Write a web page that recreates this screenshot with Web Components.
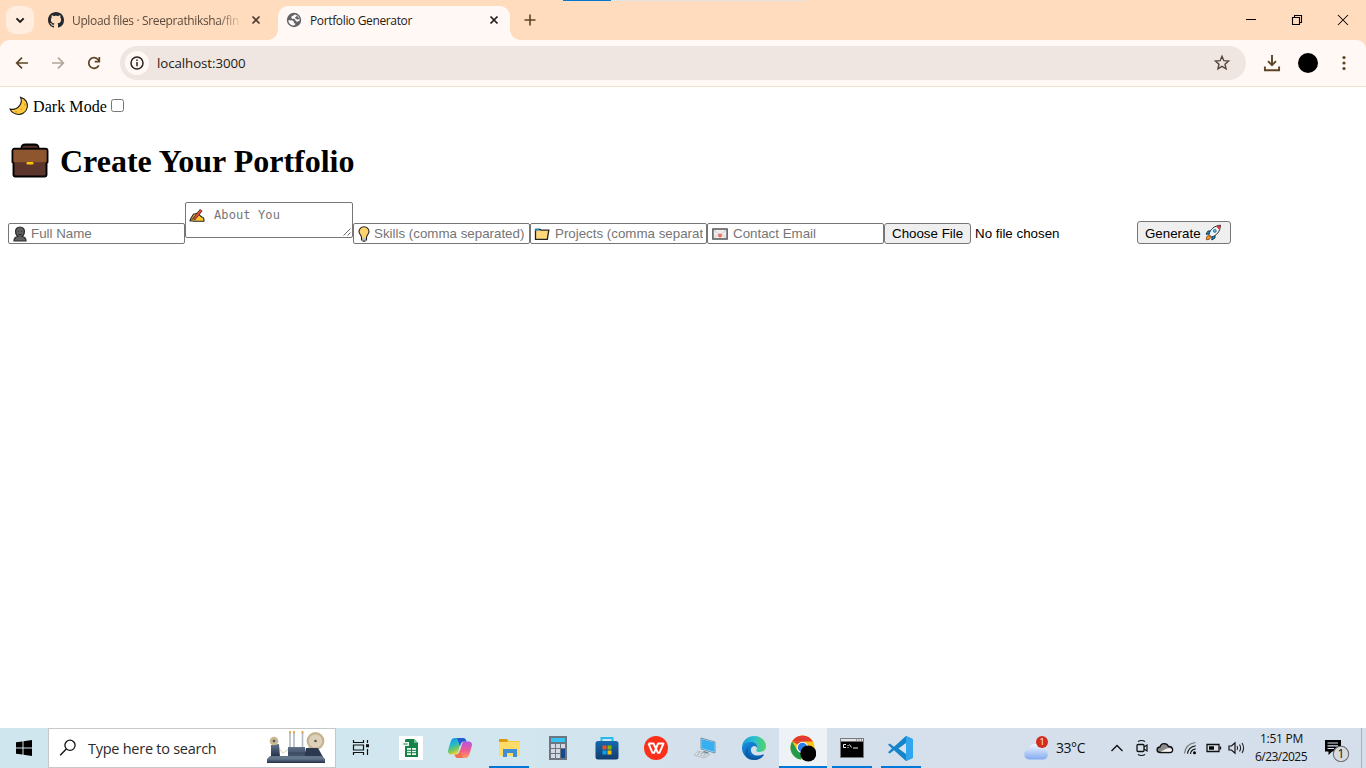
<!DOCTYPE html>
<html lang="en">
<head>
<meta charset="utf-8">
<title>Portfolio Generator</title>
<style>
html,body{margin:0;width:1366px;height:768px;overflow:hidden;background:#fff}
</style>
</head>
<body>
<desktop-screen></desktop-screen>
<script>
const ICONS = {
  chevron: [28,28,'<path d="M10.5 12.3l3.6 3.6 3.6-3.6" fill="none" stroke="#201a16" stroke-width="1.9"/>'],
  github: [16,16,'<path fill="#24292f" d="M8 0C3.58 0 0 3.58 0 8c0 3.54 2.29 6.53 5.47 7.59.4.07.55-.17.55-.38 0-.19-.01-.82-.01-1.49-2.01.37-2.53-.49-2.69-.94-.09-.23-.48-.94-.82-1.13-.28-.15-.68-.52-.01-.53.63-.01 1.08.58 1.23.82.72 1.21 1.87.87 2.33.66.07-.52.28-.87.51-1.07-1.78-.2-3.64-.89-3.64-3.95 0-.87.31-1.59.82-2.15-.08-.2-.36-1.02.08-2.12 0 0 .67-.21 2.2.82.64-.18 1.32-.27 2-.27s1.36.09 2 .27c1.53-1.04 2.2-.82 2.2-.82.44 1.1.16 1.92.08 2.12.51.56.82 1.27.82 2.15 0 3.07-1.87 3.75-3.65 3.95.29.25.54.73.54 1.48 0 1.07-.01 1.93-.01 2.2 0 .21.15.46.55.38A8.01 8.01 0 0 0 16 8c0-4.42-3.58-8-8-8z"/>'],
  close: [10,10,'<path d="M1.5 1.5l7 7M8.5 1.5l-7 7" stroke="currentColor" stroke-width="1.7"/>'],
  globe: [16,16,'<circle cx="8" cy="8" r="7.2" fill="#5f6368"/><path d="M2.300 8.300h3.200c1.300 0 2.400.8 2.400 2v.9h1.300v1.900c-.4.300-1.200.5-1.700.5C4.700 13.400 2.400 11.200 2.300 8.300z" fill="#fff8f5"/><path d="M8.600 2.500c-.3.900-1.800 1-2.600 1.600-.9.700-.9 2.300.1 2.700.8.300 2.200 0 2.900.6.700.6.500 1.700 1.400 2.100.9.400 2-.1 3-.4.900-2.800-1-6.300-4.800-6.600z" fill="#fff8f5"/><path d="M10.700 3.200c-.2 1.100-.5 1.900-1.800 2.100l.4 1c1.200.2 1.300 1.300 2.200 1.300.7 0 1.200-.5 2.100-.5" fill="#5f6368"/>'],
  plus: [14,14,'<path d="M7 1.5v11M1.5 7h11" stroke="#5c4526" stroke-width="1.6"/>'],
  min: [12,12,'<path d="M1 5.5h10" stroke="#000"/>'],
  restore: [12,12,'<path d="M1.5 3.5h7v7h-7zM3.5 3.500V1.500h7v7h-2" fill="none" stroke="#000" stroke-width="1.1"/>'],
  winclose: [12,12,'<path d="M1 1l10 10M11 1L1 11" stroke="#000" stroke-width="1.05"/>'],
  back: [16,16,'<path d="M14 8H3M8 2.700L2.700 8 8 13.300" fill="none" stroke="#5c4526" stroke-width="1.7"/>'],
  fwd: [16,16,'<path d="M2 8h11M8 2.700L13.300 8 8 13.300" fill="none" stroke="#b1a59c" stroke-width="1.7"/>'],
  reload: [16,16,'<path d="M12.800 10.400A5.300 5.300 0 1 1 12.200 4.700L13.400 6" fill="none" stroke="#5c4526" stroke-width="1.7"/><path d="M13.300 2v4.700H8.700" fill="none" stroke="#5c4526" stroke-width="1.7"/>'],
  info: [24,24,'<circle cx="12" cy="12" r="12" fill="#fff8f5"/><circle cx="12" cy="12" r="6" fill="none" stroke="#2b221c" stroke-width="1.5"/><path d="M12 11v4.200M12 8.400v1.600" stroke="#2b221c" stroke-width="1.500"/>'],
  star: [18,18,'<path d="M9 2.300l1.850 4.350 4.700.4-3.550 3.100 1.050 4.600L9 12.300l-4.050 2.450L6 10.150l-3.550-3.100 4.700-.4z" fill="none" stroke="#55463f" stroke-width="1.400"/>'],
  download: [18,18,'<path d="M9 1v10M5 7.200l4 4 4-4M1.900 12.500v3.700h14.200v-3.700" fill="none" stroke="#5c4526" stroke-width="1.900"/>'],
  avatar: [20,20,'<circle cx="10" cy="10" r="10" fill="#000"/>'],
  dots: [4,16,'<g fill="#5c4526"><circle cx="2" cy="2.500" r="1.600"/><circle cx="2" cy="8" r="1.600"/><circle cx="2" cy="13.500" r="1.600"/></g>'],
  moon: [20,20,'<path d="M11.500 1.200C16.500 2.500 19.300 7 18.300 11.500c-1.200 5.200-6.300 8-11.300 6.500-3-.9-5-2.600-5.900-4.900 3.500.7 7.300-.6 9.500-3.500 2-2.700 2.100-5.700.9-8.400z" fill="#ffc83d" stroke="#1b1b1b" stroke-width="1.100"/><path d="M15.400 7.500l.8 2M13 12.500l-1.500 1.400M8.200 15.900l-2-.3" stroke="#e39a1f" stroke-width="1.200"/>'],
  briefcase: [40,38,'<path d="M13 8V6.500q0-2.500 2.500-2.500h9Q27 4 27 6.500V8" fill="none" stroke="#000" stroke-width="5"/><path d="M13 8V7q0-2 2-2h10q2 0 2 2v1" fill="none" stroke="#5b352c" stroke-width="2.500"/><path d="M4.500 6.800h31a2 2 0 0 1 2 2V20l-1 1v12a1.500 1.500 0 0 1-1.500 1.500H5A1.500 1.500 0 0 1 3.500 33V21l-1-1V8.800a2 2 0 0 1 2-2z" fill="#5c352d" stroke="#000" stroke-width="1.900"/><path d="M3.500 7.700h33v12.600h-33z" fill="#8e562e"/><rect x="16.500" y="20" width="7" height="2.500" rx="1" fill="#ffc400"/>'],
  person: [14,16,'<path d="M7 1C3.900 1 2.500 3 2.600 5.500c0 2.600 1.200 4.300 2.400 5-2.600.4-4 1.600-4 4.500h12c0-2.900-1.400-4.100-4-4.500 1.200-.7 2.400-2.400 2.400-5C11.500 3 10 1 7 1z" fill="#616161" stroke="#2a2a2a" stroke-width="1.200"/><path d="M4.800 5.200h1M8.200 5.200h1M5.400 8.300q1.600.8 3.200 0" stroke="#222" fill="none"/>'],
  writing: [16,16,'<path d="M4.500 6.200L8.800 5l2.700 3 1.300 1c2 .3 2.400 2.300 2.100 4.300H5.500L1 12.700l.7-2z" fill="#ffc52f" stroke="#242424" stroke-width="1.100"/><path d="M12.300 2L4.500 11.500" stroke="#333" stroke-width="3.300"/><path d="M12 2.400l-7.200 8.700" stroke="#ea4933" stroke-width="2"/><path d="M2 12.300l3.700-3" stroke="#444"/>'],
  bulb: [12,16,'<path d="M6 .8C2.800.8 1 3.100 1 5.600c0 2.600 2.500 3.300 2.500 6V14h5v-2.400c0-2.700 2.500-3.400 2.500-6C11 3.100 9.200.8 6 .8z" fill="#ffd36b" stroke="#222" stroke-width="1.100"/><path d="M4.300 12h3.400v2.400H4.300z" fill="#b6bec5"/><path d="M4.500 15.200h3" stroke="#222"/>'],
  folder: [16,14,'<path d="M1.500 12.300V2.500h4.700l.8.700h7.800l-1.500 9.100z" fill="#ffd77a" stroke="#222" stroke-width="1.300"/><path d="M2 2.500h3M1.800 2v2" stroke="#168bd0" stroke-width="1.300"/>'],
  mail: [16,12,'<rect x=".9" y="1" width="14.200" height="10" fill="#eee" stroke="#555" stroke-width="1.500"/><path d="M1.700 10l5-4M14.300 10l-5-4M1.700 2L8 7l6.300-5" fill="none" stroke="#c9c9c9" stroke-width=".8"/><circle cx="8" cy="7.500" r="2" fill="#f2705c"/>'],
  rocket: [17,17,'<path d="M1.300 15.700c0-2.300.5-3.900 2.300-4.400l2.100 2.100c-.5 1.700-2 2.300-4.400 2.300z" fill="#f7931e" stroke="#8a3a15" stroke-width=".8"/><path d="M5.500 7H3L1 10.200l3.500-.3M10 11.500V14l-3.200 2 .3-3.500" fill="#1690d0" stroke="#17384b"/><path d="M4 10.500c1-4.900 5-8.700 11.500-9.300C15.200 7.500 11.400 11.800 6.500 13z" fill="#eef7fb" stroke="#202b32"/><path d="M11 2.500l4.500-1.300-1 4.800z" fill="#e73732"/><circle cx="9.800" cy="6.900" r="1.500" fill="#49b8e8" stroke="#2b5368" stroke-width=".7"/>'],
  windows: [16,16,'<path d="M0 2.300l6.500-.9v6.100H0zM7.500 1.200L16 0v7.500H7.500zM0 8.500h6.500v6.100L0 13.700zM7.500 8.500H16V16l-8.500-1.200z" fill="#000"/>'],
  search: [18,18,'<circle cx="11" cy="6.300" r="5.100" fill="none" stroke="#111" stroke-width="1.300"/><path d="M7.300 10L1.200 16.200" stroke="#111" stroke-width="1.400"/>'],
  machine: [60,34,'<defs><linearGradient id="g" x2="0" y2="1"><stop stop-color="#61748b"/><stop offset="1" stop-color="#202e44"/></linearGradient></defs><path d="M9 13L17 22 24 17M40 19l8-8" fill="none" stroke="#d9cfb0"/><path d="M5 14l8-1 1 13H5z" fill="url(#g)"/><circle cx="8" cy="10" r="4.300" fill="#c9b68e"/><circle cx="8" cy="10" r="1.300" fill="#445269"/><circle cx="49.500" cy="10" r="8.900" fill="#c4b590"/><circle cx="49.500" cy="10" r="6.600" fill="#ddd2b9"/><circle cx="49.500" cy="10" r="1.300" fill="#5a5854"/><path d="M24 1v16M28 1v16M36.500 1v16" stroke="#b4bdc6" stroke-width="1.700"/><path d="M24 0v2.500M28 0v2.500M36.500 0v2.500" stroke="#dfa445" stroke-width="1.700"/><path d="M22 16h17v11H22z" fill="url(#g)"/><path d="M40 17h12l5 9H38z" fill="#2a394f"/><path d="M4 25h52l3 3H1z" fill="#61758b"/><path d="M1 28h58v4H1z" fill="url(#g)"/><path d="M22 20h17M22 24h17" stroke="#53667c"/>'],
  taskview: [18,18,'<path d="M1.500 1v2.500h10V1M1.500 16v-2.500h10V16M1.500 6h10v5h-10zM15.500 1v3M15.500 10v6" fill="none" stroke="#111" stroke-width="1.200"/><path d="M14 5.200h3v3h-3z" fill="#111"/>'],
  sheet: [24,24,'<path fill="#fff" d="M0 0h24v24H0z"/><path d="M7 3h8l4 4v14H6V4z" fill="#138348"/><path d="M15 3v4h4" fill="#69be8c"/><path d="M8 12h9v7H8zM3 6h7v4H3z" fill="#eaf7ef"/><path d="M8 14.300h9M8 16.700h9M12.500 12v7M4.500 8h4" stroke="#138348"/>'],
  copilot: [26,24,'<defs><linearGradient id="a" x2=".4" y2="1"><stop stop-color="#168be9"/><stop offset=".45" stop-color="#25b9cb"/><stop offset=".75" stop-color="#7cc85a"/><stop offset="1" stop-color="#f2d43d"/></linearGradient><linearGradient id="b" y1="0" x2="0" y2="1"><stop stop-color="#b455df"/><stop offset=".55" stop-color="#ef5d92"/><stop offset="1" stop-color="#ff9c54"/></linearGradient></defs><path d="M8 2h9l-3 4-3 10c-.7 2-1.500 2.500-3 2.500H4.500C1.500 18.500.5 16 1.300 13.500l2.400-8C4.500 3 6 2 8 2z" fill="url(#a)"/><path d="M18 22H9l3-4 3-10c.7-2 1.500-2.500 3-2.500h3.500c3 0 4 2.500 3.200 5l-2.400 8C21.500 21 20 22 18 22z" fill="url(#b)"/><path d="M10 2h6c2 0 2.700 1 3.200 2.500l.5 1H17c-2 0-2.600 1-3.200 2.500L13 10z" fill="#2459d0"/><path d="M16 22h-5c-2 0-2.700-1-3.200-2.500l-.3-1H9c2 0 2.600-1 3.200-2.500L13 14z" fill="#f4704d"/>'],
  explorer: [24,22,'<path d="M2 2h8l2 2h11v15H2z" fill="#f8c940"/><path d="M2 2h8l1 2-1 1H2z" fill="#d99b14"/><path d="M2 5h21v14H2z" fill="#ffdb68"/><path d="M6 20v-8h14v8h-4v-4h-6v4z" fill="#3b8fd2"/>'],
  calc: [18,24,'<path d="M0 0h18v24H0z" fill="#6c7682"/><path d="M2 2h14v4H2z" fill="#36c2f2"/><path d="M2 8h4v4H2zM7 8h4v4H7zM12 8h4v4h-4zM2 13h4v4H2zM7 13h4v4H7zM2 18h4v4H2zM7 18h4v4H7z" fill="#d3d8e2"/><path d="M12 13h4v9h-4z" fill="#12498f"/>'],
  store: [24,24,'<defs><linearGradient id="s" x2="0" y2="1"><stop stop-color="#1669ae"/><stop offset="1" stop-color="#123d70"/></linearGradient></defs><path d="M6.500 7V2h11v5" fill="none" stroke="#25b9ed" stroke-width="1.900"/><rect x=".5" y="5" width="23" height="18.500" rx="2.500" fill="url(#s)"/><path d="M7.500 9.500h4v4h-4z" fill="#f25022"/><path d="M12.500 9.500h4v4h-4z" fill="#7fba00"/><path d="M7.500 14.500h4v4h-4z" fill="#00a4ef"/><path d="M12.500 14.500h4v4h-4z" fill="#ffb900"/>'],
  wps: [24,24,'<circle cx="12" cy="12" r="12" fill="#fb301b"/><path d="M4.500 7.500h5l3.300 7M4.500 7.500l4 9.300h1.600l4-9.300h1.500M11.700 12l2.200 4.800h1.500L19.500 7.500h-4" fill="none" stroke="#fff" stroke-width="1.900" stroke-linejoin="round"/>'],
  pc: [25,24,'<path d="M9 2l14 4v11L9 13z" fill="#d8f1fc" stroke="#577d96" stroke-width=".8"/><path d="M9.500 3l13 3.500v9.500L9.500 12.300z" fill="#38aff0"/><path d="M12 15l5 1.500-2 1.500-5-1.500z" fill="#718593"/><path d="M6 15l12 3.500-6 3.500-10-3z" fill="#dbe3e8" stroke="#9ca6af" stroke-width=".6"/><path d="M6 16.500l9 2.500M5 18l9 2.500" stroke="#a6b1ba" stroke-dasharray="2 1"/>'],
  edge: [24,24,'<defs><linearGradient id="e1" x2="1"><stop stop-color="#1599da"/><stop offset=".5" stop-color="#2bbfd0"/><stop offset="1" stop-color="#54d55f"/></linearGradient><linearGradient id="e2" x2="1" y2="1"><stop stop-color="#178ee0"/><stop offset="1" stop-color="#0754a5"/></linearGradient></defs><path d="M0 11C.6 4 6 0 12 0c7 0 12 5 12 10 0 4-3 6-6.200 6-2.400 0-4.300-1-3.200-2.400C16 11.800 14.500 8 9 8c-4 0-7.500 1-9 3z" fill="url(#e1)"/><path d="M0 11c1.500-3 5-5 9-5 4 0 6.500 3 6 6-.3-1-1.500-2.200-3-2-2 .2-3.600 2.500-3 5 .8 4 6 6 12 3.500.7-.2 1.200.2.800.800C19.500 22.300 16 24 12 24 5.500 24-.5 18.500 0 11z" fill="url(#e2)"/><path d="M8 10.300c-3 2-2.800 7 .5 9.700 3 2.400 7 2.300 12 .8C16 25.200 9 25 4.600 21.400 1.700 18 3 12.500 8 10.300z" fill="#0b4b91" opacity=".55"/>'],
  chrome: [27,27,'<circle cx="13.500" cy="12.500" r="12" fill="#fbc31c"/><path d="M3.100 6.500A12 12 0 0 1 23.900 6.500H13.500z" fill="#e33b2e"/><path d="M3.100 6.500L8.300 15.500 13.500 18.500l-1.500 6A12 12 0 0 1 3.100 6.500z" fill="#229b4c"/><path d="M3.100 6.500h12v6z" fill="#e33b2e"/><circle cx="13.500" cy="12.500" r="5.800" fill="#fff"/><circle cx="13.500" cy="12.500" r="4.700" fill="#2b7de9"/><circle cx="19.300" cy="18.500" r="8" fill="#000"/>'],
  cmd: [24,20,'<path d="M.5.5h23v19H.5z" fill="#000" stroke="#777"/><path d="M1 1h22v2.500H1z" fill="#e0e3e5"/><path d="M16 2h1M18.500 2h1M21 2h1" stroke="#555"/><path d="M6 6.500H3.500v3H6M8 7v1M8 9v1M9.500 6.500l2 3M13 10h5" fill="none" stroke="#eee" stroke-width="1"/>'],
  vscode: [25,25,'<path d="M18 0l7 3.300v18.400L18 25 6 14.200l-4.300 3.300L0 16.300 4 12.500 0 8.700l1.700-1.200L6 10.800z" fill="#1684ca"/><path d="M18 7v11l-7.500-5.500z" fill="#d7e2ec"/><path d="M18 0l7 3.300v18.400L18 25z" fill="#31a5ed"/>'],
  weather: [26,26,'<defs><linearGradient id="w" x2="0" y2="1"><stop stop-color="#f3f7ff"/><stop offset="1" stop-color="#83aaf0"/></linearGradient></defs><path d="M6 24.500a5.200 5.200 0 0 1-.5-10.300C6.500 10.500 9.300 9 12 9c3.500 0 6 2.200 6.800 5.200 3.400 0 6 2 6 5.200s-2.300 5.100-5 5.100z" fill="url(#w)"/><circle cx="19" cy="7" r="6" fill="#d52b1e"/>'],
  up: [14,10,'<path d="M1.500 8L7 2.500 12.500 8" fill="none" stroke="#111" stroke-width="1.400"/>'],
  cam: [14,18,'<rect x="2" y="5.500" width="7" height="7" rx="1" fill="none" stroke="#111" stroke-width="1.300"/><path d="M9 8l3-2v6L9 10M3 2.500q3.500-2 7 0M3 15.500q3.500 2 7 0" fill="none" stroke="#111" stroke-width="1.200"/>'],
  cloud: [18,14,'<path d="M4.500 11.500C0 11.500 0 6.300 4 6 5 1.500 11 1.500 12.500 5.500c5-.2 5.500 6 1.500 6z" fill="#8b8b8b" stroke="#111" stroke-width="1.300"/><path d="M4.500 10.800L11 7.500q3-1.600 5 1-.3 2.300-2 2.300z" fill="#f4f4f4"/>'],
  wifi: [14,14,'<g fill="none" stroke="#111" stroke-width="1.100"><path d="M1.500 12.500C2 6.500 6 2.500 12.500 1.500" stroke="#777"/><path d="M4.500 12.800C5 8.500 8 5.700 12.700 4.800M7.500 13c.3-2.700 2-4.600 5.200-5.100"/></g><circle cx="11.500" cy="11.800" r="1.500"/>'],
  battery: [16,10,'<path d="M1 1.500h12v7H1zM14.500 3.500v3" fill="none" stroke="#111" stroke-width="1.300"/><path d="M3 3.300h5v3.400H3z"/>'],
  sound: [18,14,'<path d="M1 5h2.500L7 1.800v10.400L3.500 9H1z" fill="none" stroke="#111" stroke-width="1.200"/><path d="M9 5q1.300 2 0 4M11.500 3.500q2.200 3.500 0 7M14 2q3.200 5 0 10" fill="none" stroke="#222" stroke-width="1.100"/>'],
  notice: [26,28,'<path d="M1 6h16v11.500H8L4.500 21v-3.500H1z"/><path d="M3.500 9H14M3.500 11.800H14M3.500 14.500H10" stroke="#dce2ea" stroke-width="1.200"/><circle cx="17" cy="20" r="7.700" fill="#d7dade" stroke="#6d6d6d" stroke-width="1.100"/>']
};

class UiIcon extends HTMLElement {
  connectedCallback() {
    const [w, h, body] = ICONS[this.getAttribute('name')];
    this.attachShadow({mode: 'open'}).innerHTML =
      `<style>:host{display:block;flex:none;width:${w}px;height:${h}px}svg{display:block}</style>
       <svg width="${w}" height="${h}" viewBox="0 0 ${w} ${h}" aria-hidden="true">${body}</svg>`;
  }
}
customElements.define('ui-icon', UiIcon);

/* A one-line label whose tracking is adjusted to the width it is given. */
class UiLabel extends HTMLElement {
  connectedCallback() {
    const w = Number(this.getAttribute('width'));
    this.attachShadow({mode: 'open'}).innerHTML =
      `<style>:host{display:block;flex:none;width:${w}px;white-space:nowrap}span{display:inline-block}</style><span><slot></slot></span>`;
    const s = this.shadowRoot.querySelector('span');
    const n = this.textContent.length;
    const natural = s.getBoundingClientRect().width;
    if (natural) s.style.letterSpacing = ((w - natural) / n).toFixed(3) + 'px';
  }
}
customElements.define('ui-label', UiLabel);

function define(name, css, html) {
  const t = document.createElement('template');
  t.innerHTML = `<style>*{box-sizing:border-box}${css}</style>${html}`;
  customElements.define(name, class extends HTMLElement {
    constructor() {
      super();
      this.attachShadow({mode: 'open'}).append(t.content.cloneNode(true));
    }
  });
}

define('browser-tab', `
  :host{display:flex;align-items:center;height:28px;font:12px/28px "Open Sans",sans-serif;color:#5c4a3d}
  .title{margin-left:8px;width:168px;overflow:hidden;padding-top:1px}
  :host(:not([active])) .title{-webkit-mask:linear-gradient(90deg,#000 146px,transparent 170px)}
  .x{margin-left:11px;color:#4b3c30}
  :host([active]){position:relative;width:232px;height:34px;padding:0 0 6px 8px;background:#fff8f5;border-radius:10px 10px 0 0;color:#241a15}
  :host([active]) .title{width:171px}
  :host([active]) .x{margin-left:8px;color:#211a16}
  :host([active])::before,:host([active])::after{content:"";position:absolute;bottom:0;width:10px;height:10px}
  :host([active])::before{left:-10px;background:radial-gradient(circle at 0 0,transparent 9.500px,#fff8f5 10px)}
  :host([active])::after{right:-10px;background:radial-gradient(circle at 100% 0,transparent 9.500px,#fff8f5 10px)}
`, `<slot name="icon"></slot><div class="title"><slot></slot></div><ui-icon class="x" name="close"></ui-icon>`);

define('tab-strip', `
  :host{display:flex;height:40px;padding:6px 0 0 6px;background:#ffdcbd;position:relative}
  .drop{width:28px;height:28px;border-radius:9px;background:#ffede0}
  .first{margin-left:14px;width:230px}
  .plus{margin:7px 0 0 13px}
  .controls{display:flex;margin:8px 0 0 auto;gap:34px;padding-right:17px}
  .load{position:absolute;left:563px;top:0;width:242px;height:1px;background:linear-gradient(90deg,#0078d4 48px,#e5e5e5 48px)}
`, `<div class="drop"><ui-icon name="chevron"></ui-icon></div>
  <browser-tab class="first"><ui-icon slot="icon" name="github"></ui-icon><ui-label width="167">Upload files · Sreeprathiksha/fin</ui-label></browser-tab>
  <browser-tab active><ui-icon slot="icon" name="globe"></ui-icon><ui-label width="102">Portfolio Generator</ui-label></browser-tab>
  <ui-icon class="plus" name="plus"></ui-icon>
  <div class="controls"><ui-icon name="min"></ui-icon><ui-icon name="restore"></ui-icon><ui-icon name="winclose"></ui-icon></div>
  <div class="load"></div>`);

define('browser-toolbar', `
  :host{display:block;height:47px;background:#ffdcbd}
  .bar{display:flex;align-items:center;height:47px;background:#fff8f5;border-radius:9px 9px 0 0;border-bottom:1px solid #f0e0d0;padding:0 20px 0 14px}
  .nav{display:flex;gap:20px}
  .url{display:flex;align-items:center;margin-left:18px;width:1126px;height:34px;border-radius:17px;background:#efe6e1;padding:0 15px 0 5px;font:13.300px/34px "Open Sans",sans-serif;color:#241a15}
  .url ui-label{margin-left:8px}
  .star{margin-left:auto}
  .dl{margin-left:17px}.av{margin-left:17px}.dots{margin-left:24px}
`, `<div class="bar"><div class="nav"><ui-icon name="back"></ui-icon><ui-icon name="fwd"></ui-icon><ui-icon name="reload"></ui-icon></div>
  <div class="url"><ui-icon name="info"></ui-icon><ui-label width="88.500">localhost:3000</ui-label><ui-icon class="star" name="star"></ui-icon></div>
  <ui-icon class="dl" name="download"></ui-icon><ui-icon class="av" name="avatar"></ui-icon><ui-icon class="dots" name="dots"></ui-icon></div>`);

define('text-field', `
  :host{display:flex;align-items:center;flex:none;width:177px;height:21px;border:1px solid #767676;border-radius:2px;background:#fff;padding:0 3px;color:#757575;font:13.333px/19px "Liberation Sans",Arial,sans-serif}
  .clip{display:flex;align-items:center;width:169px;overflow:hidden;white-space:nowrap}
`, `<div class="clip"><slot></slot></div>`);

define('text-area', `
  :host{display:flex;flex:none;width:168px;height:36px;margin-bottom:6px;border:1px solid #767676;border-radius:2px;background:#fff;padding:4px 0 0 3px;color:#757575;font:12px/16px "DejaVu Sans Mono",monospace}
  svg{align-self:flex-end;margin-left:auto}
`, `<slot></slot><svg width="10" height="10"><path d="M1.500 8.500l7-7M5.500 8.500l3-3" stroke="#555" stroke-width=".9"/></svg>`);

define('push-button', `
  :host{display:flex;align-items:center;flex:none;box-sizing:border-box;height:21px;border:1px solid #767676;border-radius:3px;background:#efefef;padding:0 7px;color:#000;font:13.333px/19px "Liberation Sans",Arial,sans-serif;white-space:nowrap}
`, `<slot></slot>`);

define('portfolio-page', `
  :host{display:block;height:641px;padding:8px 8px 0;background:#fff;color:#000;font:16px/22px "Liberation Serif","Times New Roman",serif}
  .mode{display:flex;align-items:center;height:22px}
  .mode ui-icon{margin:0 4px 0 1px}
  .mode ui-label{margin-top:2px}
  .check{width:13px;height:13px;border:1px solid #767676;border-radius:2.500px;margin:0 0 1px 4px}
  h1{display:flex;align-items:center;height:37px;margin:25px 0 0;font-size:32px;line-height:37px}
  h1 ui-icon{margin:0 10px 0 2px}
  h1 ui-label{margin-top:2px}
  form{display:flex;align-items:flex-end;margin-top:23px;height:42px}
  .p{margin:0 4px 0 1px}.b{margin:0 4px 0 1px}.f{margin:0 5px 0 0}.m{margin:0 5px 0 1px}
  .w{margin:1px 9px 0 0}
  .file{width:87px}
  .none{width:162px;margin-left:4px;font:13.333px/21px "Liberation Sans",Arial,sans-serif}
  .go{width:94px;height:23px;padding-top:1px}
  .go ui-icon{margin:-1px 0 0 4px}
`, `<div class="mode"><ui-icon name="moon"></ui-icon><ui-label width="74">Dark Mode</ui-label><div class="check"></div></div>
  <h1><ui-icon name="briefcase"></ui-icon><ui-label width="294.500">Create Your Portfolio</ui-label></h1>
  <form>
    <text-field><ui-icon class="p" name="person"></ui-icon><span>Full Name</span></text-field>
    <text-area><ui-icon class="w" name="writing"></ui-icon><ui-label width="66">About You</ui-label></text-area>
    <text-field><ui-icon class="b" name="bulb"></ui-icon><span>Skills (comma separated)</span></text-field>
    <text-field><ui-icon class="f" name="folder"></ui-icon><span>Projects (comma separated)</span></text-field>
    <text-field><ui-icon class="m" name="mail"></ui-icon><span>Contact Email</span></text-field>
    <push-button class="file">Choose File</push-button><span class="none">No file chosen</span>
    <push-button class="go">Generate<ui-icon name="rocket"></ui-icon></push-button>
  </form>`);

define('task-button', `
  :host{display:flex;align-items:center;justify-content:center;flex:none;width:49px;height:40px}
  .cell{display:flex;align-items:center;justify-content:center;width:48px;height:40px}
  :host([open]) .cell{width:40px;border-bottom:2px solid #0078d7;padding-top:2px}
  :host([current]) .cell{width:48px;background:#edf2f7}
`, `<div class="cell"><slot></slot></div>`);

define('task-bar', `
  :host{display:flex;align-items:center;height:40px;background:linear-gradient(90deg,#d0e6ee 0,#d1e6ee 38%,#d4e0eb 52%,#d5dfeb 100%);font:12px/18px "Open Sans",sans-serif;color:#111}
  .start{width:48px;display:flex;justify-content:center}
  .search{display:flex;align-items:center;width:288px;height:40px;border:1px solid #c5c8ca;background:#fff;padding:0 9px 0 10px;font-size:14.500px;color:#2b2b2b}
  .search ui-label{margin:2px 0 0 11px}
  .search .art{margin-left:auto}
  .view{width:49px;margin-right:1px}
  .tray{display:flex;align-items:center;margin-left:auto;height:40px}
  .weather{position:relative}
  .badge{position:absolute;left:13px;top:0;width:12px;text-align:center;font-size:9px;line-height:14px;color:#fff}
  .temp{font-size:14px;margin-left:7px}
  .clock{width:52px;margin:0 17px 0 9px}
  .clock ui-label{line-height:18px}
  .clock ui-label:first-child{margin-left:5px}
  .note{position:relative}
  .num{position:absolute;left:9.500px;top:11px;width:15px;text-align:center;font-size:12px;line-height:18px}
  .end{width:5px;height:40px;border-left:1px solid #a9b2bc;margin-left:11px}
`, `<div class="start"><ui-icon name="windows"></ui-icon></div>
  <div class="search"><ui-icon name="search"></ui-icon><ui-label width="128.500">Type here to search</ui-label><ui-icon class="art" name="machine"></ui-icon></div>
  <task-button class="view"><ui-icon name="taskview"></ui-icon></task-button>
  <task-button><ui-icon name="sheet"></ui-icon></task-button>
  <task-button><ui-icon name="copilot"></ui-icon></task-button>
  <task-button open><ui-icon name="explorer"></ui-icon></task-button>
  <task-button><ui-icon name="calc"></ui-icon></task-button>
  <task-button><ui-icon name="store"></ui-icon></task-button>
  <task-button><ui-icon name="wps"></ui-icon></task-button>
  <task-button><ui-icon name="pc"></ui-icon></task-button>
  <task-button><ui-icon name="edge"></ui-icon></task-button>
  <task-button open current><ui-icon name="chrome"></ui-icon></task-button>
  <task-button open><ui-icon name="cmd"></ui-icon></task-button>
  <task-button open><ui-icon name="vscode"></ui-icon></task-button>
  <div class="tray">
    <div class="weather"><ui-icon name="weather"></ui-icon><span class="badge">1</span></div>
    <ui-label class="temp" width="29">33°C</ui-label>
    <ui-icon name="up" style="margin-left:25px"></ui-icon>
    <ui-icon name="cam" style="margin-left:11px"></ui-icon>
    <ui-icon name="cloud" style="margin-left:7px"></ui-icon>
    <ui-icon name="wifi" style="margin-left:9px"></ui-icon>
    <ui-icon name="battery" style="margin-left:9px"></ui-icon>
    <ui-icon name="sound" style="margin-left:6px"></ui-icon>
    <div class="clock"><ui-label width="43">1:51 PM</ui-label><ui-label width="52">6/23/2025</ui-label></div>
    <div class="note"><ui-icon name="notice"></ui-icon><span class="num">1</span></div>
    <div class="end"></div>
  </div>`);

define('desktop-screen', `
  :host{display:grid;grid-template-rows:40px 47px 641px 40px;width:1366px;height:768px;overflow:hidden}
`, `<tab-strip></tab-strip><browser-toolbar></browser-toolbar><portfolio-page></portfolio-page><task-bar></task-bar>`);
</script>
</body>
</html>
